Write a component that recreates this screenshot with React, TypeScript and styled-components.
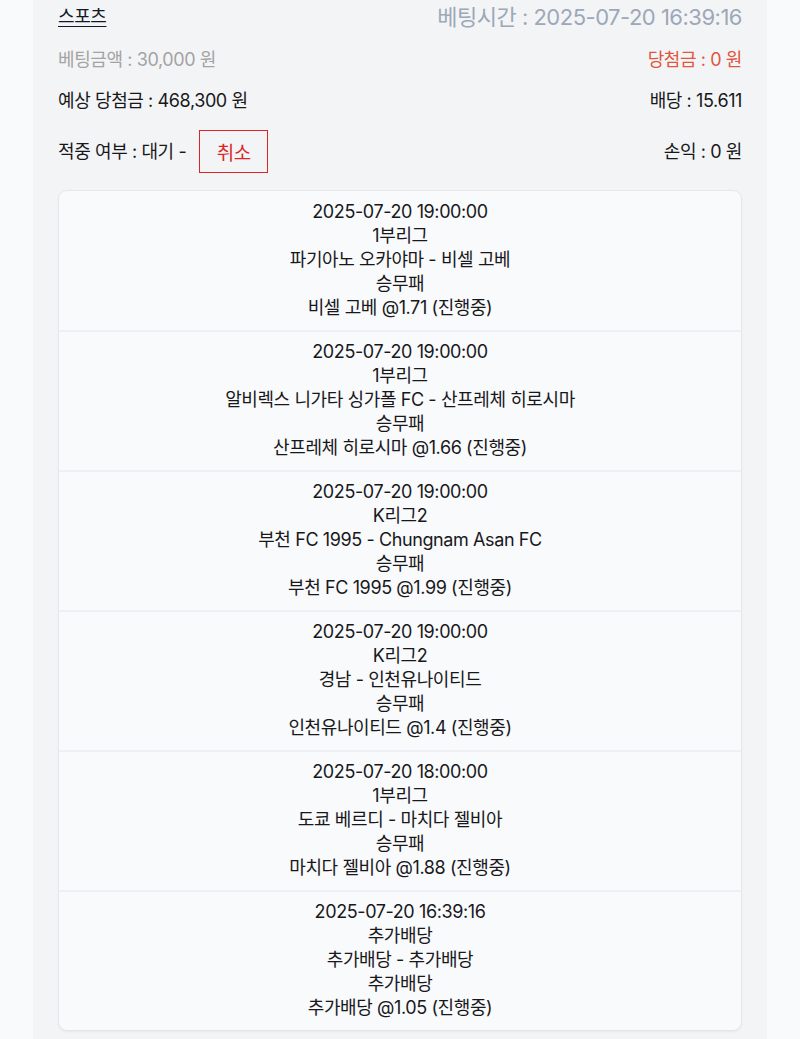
import styled, { createGlobalStyle } from 'styled-components';

const GlobalStyle = createGlobalStyle`
  html, body {
    margin: 0;
    padding: 0;
    background: #f9fafb;
  }
  body {
    font-family: Inter, "Noto Sans CJK KR", "Noto Sans", sans-serif;
    color: #18181b;
  }
`;

interface Bet {
  time: string;
  league: string;
  match: string;
  market: string;
  pick: string;
}

const bets: Bet[] = [
  { time: '2025-07-20 19:00:00', league: '1부리그', match: '파기아노 오카야마 - 비셀 고베', market: '승무패', pick: '비셀 고베 @1.71 (진행중)' },
  { time: '2025-07-20 19:00:00', league: '1부리그', match: '알비렉스 니가타 싱가폴 FC - 산프레체 히로시마', market: '승무패', pick: '산프레체 히로시마 @1.66 (진행중)' },
  { time: '2025-07-20 19:00:00', league: 'K리그2', match: '부천 FC 1995 - Chungnam Asan FC', market: '승무패', pick: '부천 FC 1995 @1.99 (진행중)' },
  { time: '2025-07-20 19:00:00', league: 'K리그2', match: '경남 - 인천유나이티드', market: '승무패', pick: '인천유나이티드 @1.4 (진행중)' },
  { time: '2025-07-20 18:00:00', league: '1부리그', match: '도쿄 베르디 - 마치다 젤비아', market: '승무패', pick: '마치다 젤비아 @1.88 (진행중)' },
  { time: '2025-07-20 16:39:16', league: '추가배당', match: '추가배당 - 추가배당', market: '추가배당', pick: '추가배당 @1.05 (진행중)' },
];

const Panel = styled.div`
  width: 734px;
  margin-left: 33px;
  box-sizing: border-box;
  padding: 0 25px 9px;
  background: #f3f4f6;
`;

const Row = styled.div<{ $gap?: number }>`
  display: flex;
  justify-content: space-between;
  align-items: center;
  margin-top: ${p => p.$gap ?? 17}px;
  font-size: 18px;
  line-height: 24px;
  letter-spacing: -0.4px;
`;

const HeaderRow = styled(Row)`
  height: 34px;
`;

const Category = styled.span`
  color: #111827;
  text-decoration: underline;
  text-underline-offset: 3px;
`;

const BetTime = styled.span`
  font-size: 22px;
  letter-spacing: -0.5px;
  color: #9ca8b8;
`;

const Text = styled.span<{ $tone?: 'muted' | 'win' }>`
  color: ${p => (p.$tone === 'muted' ? '#a3a3a3' : p.$tone === 'win' ? '#e2553f' : '#18181b')};
`;

const Status = styled.div`
  display: flex;
  align-items: center;
  gap: 13px;
`;

const CancelButton = styled.button`
  width: 69px;
  height: 43px;
  border: 1px solid #dc2626;
  background: transparent;
  color: #dc2626;
  font-family: inherit;
  font-size: 19px;
  letter-spacing: -0.4px;
  padding: 0;
  cursor: pointer;
`;

const Card = styled.div`
  margin-top: 17px;
  background: #f9fafb;
  border: 1px solid #e5e7eb;
  border-radius: 9px;
  box-shadow: 0 1px 2px rgba(0, 0, 0, 0.05);
  overflow: hidden;
`;

const Item = styled.div`
  padding: 9px 0 10px;
  text-align: center;
  font-size: 18px;
  line-height: 24px;
  letter-spacing: -0.4px;
  color: #18181b;
  & + & {
    border-top: 2px solid #eef0f3;
    padding-top: 8px;
  }
`;

export default function App() {
  return (
    <>
      <GlobalStyle />
      <Panel>
        <HeaderRow $gap={0}>
          <Category>스포츠</Category>
          <BetTime>베팅시간 : 2025-07-20 16:39:16</BetTime>
        </HeaderRow>
        <Row $gap={14}>
          <Text $tone="muted">베팅금액 : 30,000 원</Text>
          <Text $tone="win">당첨금 : 0 원</Text>
        </Row>
        <Row>
          <Text>예상 당첨금 : 468,300 원</Text>
          <Text>배당 : 15.611</Text>
        </Row>
        <Row>
          <Status>
            <Text>적중 여부 : 대기 -</Text>
            <CancelButton>취소</CancelButton>
          </Status>
          <Text>손익 : 0 원</Text>
        </Row>
        <Card>
          {bets.map((b, i) => (
            <Item key={i}>
              <div>{b.time}</div>
              <div>{b.league}</div>
              <div>{b.match}</div>
              <div>{b.market}</div>
              <div>{b.pick}</div>
            </Item>
          ))}
        </Card>
      </Panel>
    </>
  );
}
